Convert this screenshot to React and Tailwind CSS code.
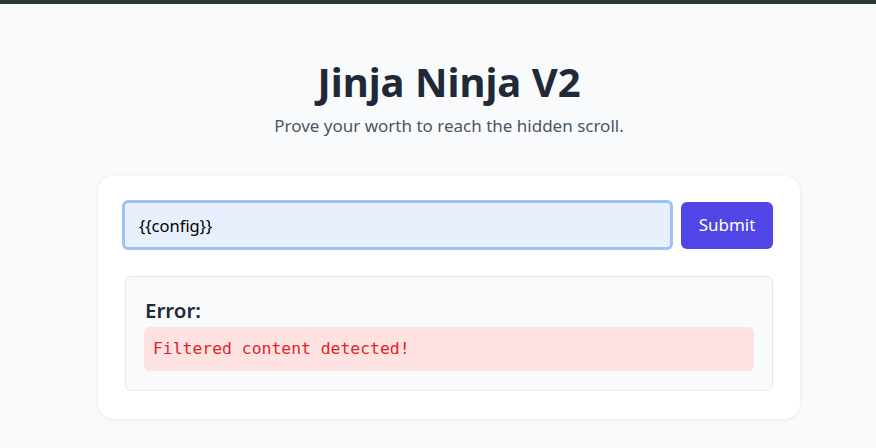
import React, { useState } from "react";

const App = () => {
  const [value, setValue] = useState("{{config}}");

  return (
    <div
      className="min-h-screen bg-[#f9fafb] text-[#1f2937]"
      style={{ fontFamily: '"Noto Sans", "Open Sans", sans-serif' }}
    >
      {/* top strip */}
      <div className="h-1 bg-[#2b3a31]" />

      <div className="flex flex-col items-center pt-[52px] pl-[22px]">
        <h1 className="text-[40px] leading-[52px] font-bold text-[#1f2937]">
          Jinja Ninja V2
        </h1>
        <p className="mt-[5px] text-[17px] leading-[26px] text-[#4b5563]">
          Prove your worth to reach the hidden scroll.
        </p>

        {/* Card */}
        <div className="mt-[37px] w-[702px] bg-white rounded-2xl shadow-[0_1px_4px_rgba(0,0,0,0.08)] px-6 pt-6 pb-7">
          <form
            onSubmit={(e) => e.preventDefault()}
            className="flex items-center gap-2"
          >
            <input
              type="text"
              value={value}
              onChange={(e) => setValue(e.target.value)}
              className="flex-1 h-[50px] px-[14px] text-[16.5px] text-black bg-[#e8f0fe] border-[3px] border-[#9ec1f6] rounded-md outline-none"
            />
            <button
              type="submit"
              className="w-[92px] h-[47px] mr-[3px] bg-[#4f46e5] text-white text-[17px] rounded-md"
            >
              Submit
            </button>
          </form>

          {/* Error box */}
          <div className="mt-[26px] ml-[3px] mr-[3px] bg-[#f9fafb] border border-[#e5e7eb] rounded-md px-[18px] py-[19px]">
            <h3 className="ml-px text-[20.5px] leading-7 font-semibold text-[#1f2937]">
              Error:
            </h3>
            <pre
              className="mt-[3px] bg-[#fee2e2] text-[#dc2626] rounded-md px-[9px] py-[10px] text-[16.4px] leading-6"
              style={{ fontFamily: '"DejaVu Sans Mono", "Liberation Mono", monospace' }}
            >
              Filtered content detected!
            </pre>
          </div>
        </div>
      </div>
    </div>
  );
};

export default App;
